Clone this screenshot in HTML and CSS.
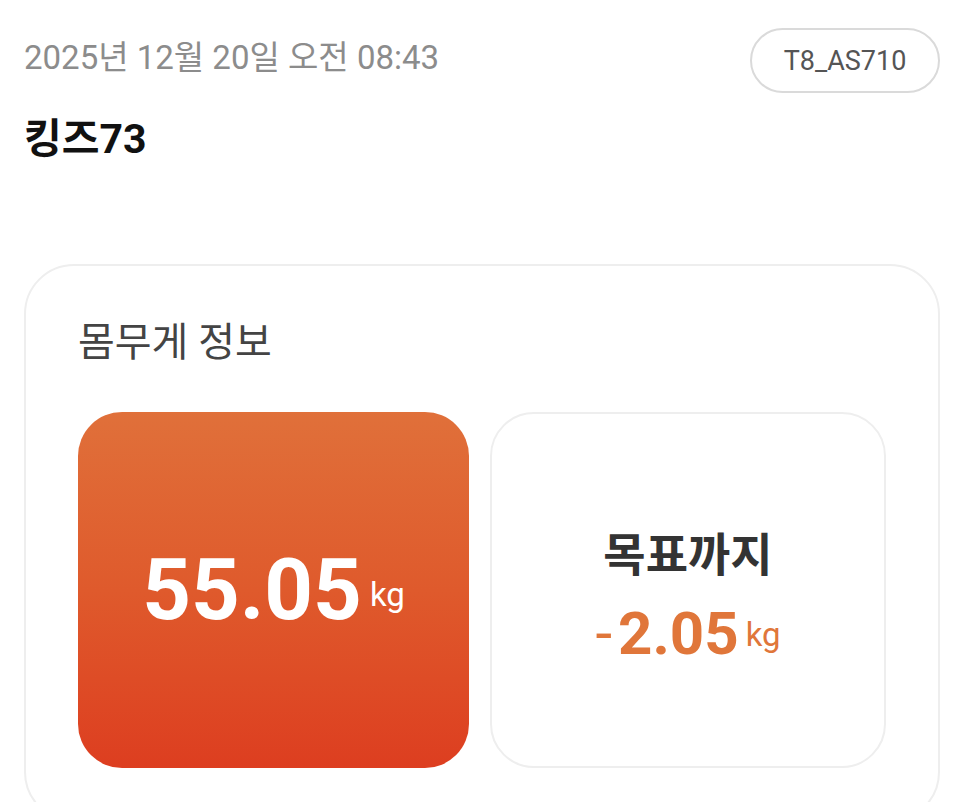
FILE: index.html
```html
<!DOCTYPE html>
<html lang="ko">
<head>
<meta charset="utf-8">
<title>몸무게 정보</title>
<link rel="stylesheet" href="styles.css">
</head>
<body>
<div class="page">
  <header class="top">
    <div class="date">2025년 12월 20일 오전 08:43</div>
    <div class="badge">T8_AS710</div>
  </header>
  <h1 class="name">킹즈73</h1>
  <section class="card">
    <h2 class="card-title">몸무게 정보</h2>
    <div class="tiles">
      <div class="tile tile-main">
        <div class="main-value"><span class="big">55.05</span><span class="unit">kg</span></div>
      </div>
      <div class="tile tile-goal">
        <div class="goal-label">목표까지</div>
        <div class="goal-value"><span class="minus">-</span><span class="num">2.05</span><span class="unit unit-goal">kg</span></div>
      </div>
    </div>
  </section>
</div>
</body>
</html>
```

FILE: styles.css
```css
* { box-sizing: border-box; }
html, body { margin: 0; padding: 0; background: #ffffff; }
body {
  font-family: Roboto, "Noto Sans CJK KR", sans-serif;
  color: #111;
  overflow: hidden;
}
.page {
  width: 960px;
  height: 802px;
  padding: 28px 20px 0 24px;
  overflow: hidden;
}
.top {
  display: flex;
  justify-content: space-between;
  align-items: center;
  height: 65px;
}
.date {
  font-size: 33px;
  color: #8c8c8c;
  line-height: 40px;
  margin-top: -6px;
}
.badge {
  width: 190px;
  height: 65px;
  border: 2px solid #dadada;
  border-radius: 33px;
  display: flex;
  align-items: center;
  justify-content: center;
  font-size: 27px;
  color: #555;
}
.name {
  margin: 22px 0 0 0;
  font-size: 41px;
  line-height: 48px;
  font-weight: 700;
  color: #111;
}
.card {
  margin-top: 101px;
  border: 2px solid #eeeeee;
  border-radius: 50px;
  padding: 0 52px 52px 52px;
}
.card-title {
  margin: 53px 0 0 0;
  font-size: 40px;
  line-height: 48px;
  font-weight: 400;
  color: #444;
}
.tiles {
  margin-top: 45px;
  display: grid;
  grid-template-columns: 391px 1fr;
  gap: 21px;
}
.tile {
  height: 356px;
  border-radius: 44px;
  display: flex;
  flex-direction: column;
  align-items: center;
  justify-content: center;
}
.tile-main {
  background: linear-gradient(180deg, #e0703a 0%, #df5a2c 50%, #dd3e20 100%);
}
.main-value {
  color: #ffffff;
  line-height: 1;
  white-space: nowrap;
}
.big {
  font-size: 85px;
  font-weight: 700;
}
.unit {
  font-size: 33px;
  vertical-align: 13px;
  margin-left: 8px;
}
.tile-goal {
  border: 2px solid #eeeeee;
  padding-top: 12px;
}
.goal-label {
  font-size: 46px;
  line-height: 54px;
  font-weight: 700;
  color: #333;
}
.goal-value {
  margin-top: 22px;
  color: #e0763a;
  line-height: 1;
  white-space: nowrap;
}
.minus {
  font-size: 60px;
  font-weight: 400;
  margin-right: 6px;
}
.num {
  font-size: 60px;
  font-weight: 700;
}
.unit-goal {
  font-size: 33px;
  vertical-align: 8px;
  margin-left: 7px;
}
```
